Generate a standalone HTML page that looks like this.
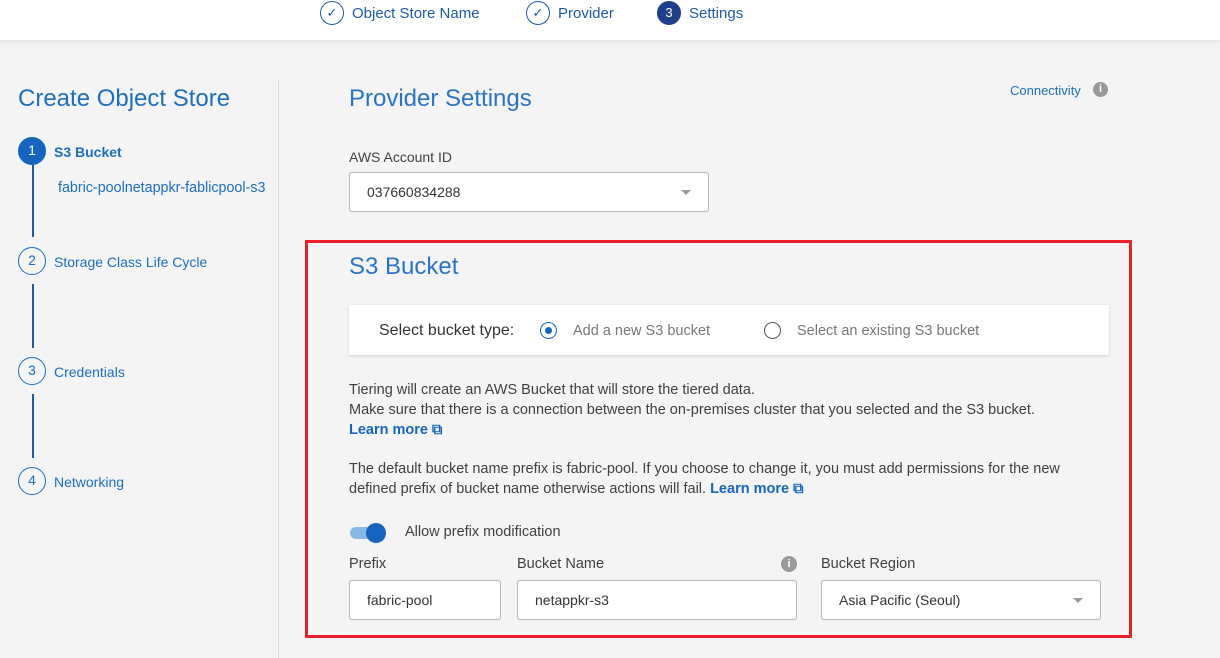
<!DOCTYPE html>
<html><head><meta charset="utf-8"><style>
*{box-sizing:border-box;margin:0;padding:0}
body{width:1220px;height:658px;background:#f4f4f4;font-family:"Liberation Sans",sans-serif;position:relative;overflow:hidden;color:#404040;font-size:14px}
.a{position:absolute;white-space:nowrap}
.hdr{position:absolute;left:0;top:0;width:1220px;height:40px;background:#fff;box-shadow:0 2px 4px rgba(0,0,0,.08)}
.ck{position:absolute;width:24px;height:24px;border:1.5px solid #1e5aa8;border-radius:50%;color:#1e5aa8;font-size:13px;text-align:center;line-height:21px}
.blue{color:#1e5aa8}
.step{position:absolute;width:28px;height:28px;border-radius:50%;border:1.5px solid #1b6ec2;color:#1b6ec2;text-align:center;line-height:25px;font-size:14px;background:#f4f4f4}
.vl{position:absolute;left:32px;width:1.5px;background:#1e5aa8}
.inp{position:absolute;background:#fff;border:1px solid #b5b5b5;border-radius:3px;padding-left:17px;line-height:38px;font-size:14px;color:#333}
.tri{position:absolute;width:0;height:0;border-left:5px solid transparent;border-right:5px solid transparent;border-top:5px solid #999}
</style></head><body>
<div class="hdr">
 <div class="ck" style="left:320px;top:1px">✓</div><div class="a blue" style="left:352px;top:5px;font-size:15px">Object Store Name</div>
 <div class="ck" style="left:526px;top:1px">✓</div><div class="a blue" style="left:558px;top:5px;font-size:15px">Provider</div>
 <div class="ck" style="left:657px;top:1px;background:#1e3f8a;border-color:#1e3f8a;color:#fff">3</div><div class="a blue" style="left:689px;top:5px;font-size:15px">Settings</div>
</div>
<div class="a" style="left:278px;top:80px;width:1px;height:578px;background:#ddd"></div>
<div class="a" style="left:18px;top:85px;font-size:24px;color:#1b6ec2">Create Object Store</div>
<div class="vl" style="top:165px;height:72px"></div>
<div class="vl" style="top:284px;height:64px"></div>
<div class="vl" style="top:394px;height:64px"></div>
<div class="step" style="left:18px;top:137px;background:#1565c0;border-color:#1565c0;color:#fff">1</div>
<div class="a" style="left:54px;top:144px;font-weight:bold;color:#1b6ec2">S3 Bucket</div>
<div class="a" style="left:58px;top:180px;font-size:14.3px;color:#1b6ec2">fabric-poolnetappkr-fablicpool-s3</div>
<div class="step" style="left:18px;top:247px">2</div><div class="a" style="left:54px;top:254px;color:#1b6ec2">Storage Class Life Cycle</div>
<div class="step" style="left:18px;top:357px">3</div><div class="a" style="left:54px;top:364px;color:#1b6ec2">Credentials</div>
<div class="step" style="left:18px;top:467px">4</div><div class="a" style="left:54px;top:474px;color:#1b6ec2">Networking</div>

<div class="a" style="left:349px;top:85px;font-size:24px;color:#2a74c6">Provider Settings</div>
<div class="a" style="left:1010px;top:83px;font-size:13px;color:#1b6ec2">Connectivity</div>
<div class="a" style="left:1093px;top:82px;width:15px;height:15px;border-radius:50%;background:#999;color:#fff;font-size:11px;font-weight:bold;text-align:center;line-height:15px">i</div>
<div class="a" style="left:349px;top:149px">AWS Account ID</div>
<div class="inp" style="left:349px;top:172px;width:360px;height:40px">037660834288</div>
<div class="tri" style="left:681px;top:190px"></div>

<div class="a" style="left:305px;top:240px;width:827px;height:398px;border:3px solid #e8202a"></div>
<div class="a" style="left:349px;top:253px;font-size:24px;color:#2a74c6">S3 Bucket</div>
<div class="a" style="left:349px;top:305px;width:760px;height:50px;background:#fff;box-shadow:0 1px 3px rgba(0,0,0,.15)"></div>
<div class="a" style="left:379px;top:322px;font-size:16px;color:#333">Select bucket type:</div>
<div class="a" style="left:540px;top:322px;width:17px;height:17px;border:1.5px solid #1565c0;border-radius:50%"><div style="margin:3.5px;width:7px;height:7px;border-radius:50%;background:#1565c0"></div></div>
<div class="a" style="left:573px;top:323px;color:#777;font-size:14.5px">Add a new S3 bucket</div>
<div class="a" style="left:764px;top:322px;width:17px;height:17px;border:1.5px solid #555;border-radius:50%"></div>
<div class="a" style="left:797px;top:323px;color:#777;font-size:14.5px">Select an existing S3 bucket</div>
<div class="a" style="left:349px;top:380px;line-height:20px;font-size:14.5px">Tiering will create an AWS Bucket that will store the tiered data.<br>Make sure that there is a connection between the on-premises cluster that you selected and the S3 bucket.<br><b style="color:#1565c0">Learn more ⧉</b></div>
<div class="a" style="left:349px;top:459px;line-height:20px;font-size:14.5px">The default bucket name prefix is fabric-pool. If you choose to change it, you must add permissions for the new<br>defined prefix of bucket name otherwise actions will fail. <b style="color:#1565c0">Learn more ⧉</b></div>
<div class="a" style="left:350px;top:527px;width:30px;height:12px;border-radius:6px;background:#8ab8e6"></div>
<div class="a" style="left:366px;top:523px;width:20px;height:20px;border-radius:50%;background:#1565c0"></div>
<div class="a" style="left:405px;top:524px;font-size:14.5px">Allow prefix modification</div>
<div class="a" style="left:349px;top:556px;font-size:14.5px">Prefix</div>
<div class="a" style="left:517px;top:556px;font-size:14.5px">Bucket Name</div>
<div class="a" style="left:781px;top:556px;width:16px;height:16px;border-radius:50%;background:#999;color:#fff;font-size:11px;font-weight:bold;text-align:center;line-height:16px">i</div>
<div class="a" style="left:821px;top:556px;font-size:14.5px">Bucket Region</div>
<div class="inp" style="left:349px;top:580px;width:152px;height:40px">fabric-pool</div>
<div class="inp" style="left:517px;top:580px;width:280px;height:40px">netappkr-s3</div>
<div class="inp" style="left:821px;top:580px;width:280px;height:40px">Asia Pacific (Seoul)</div>
<div class="tri" style="left:1073px;top:598px"></div>
</body></html>
